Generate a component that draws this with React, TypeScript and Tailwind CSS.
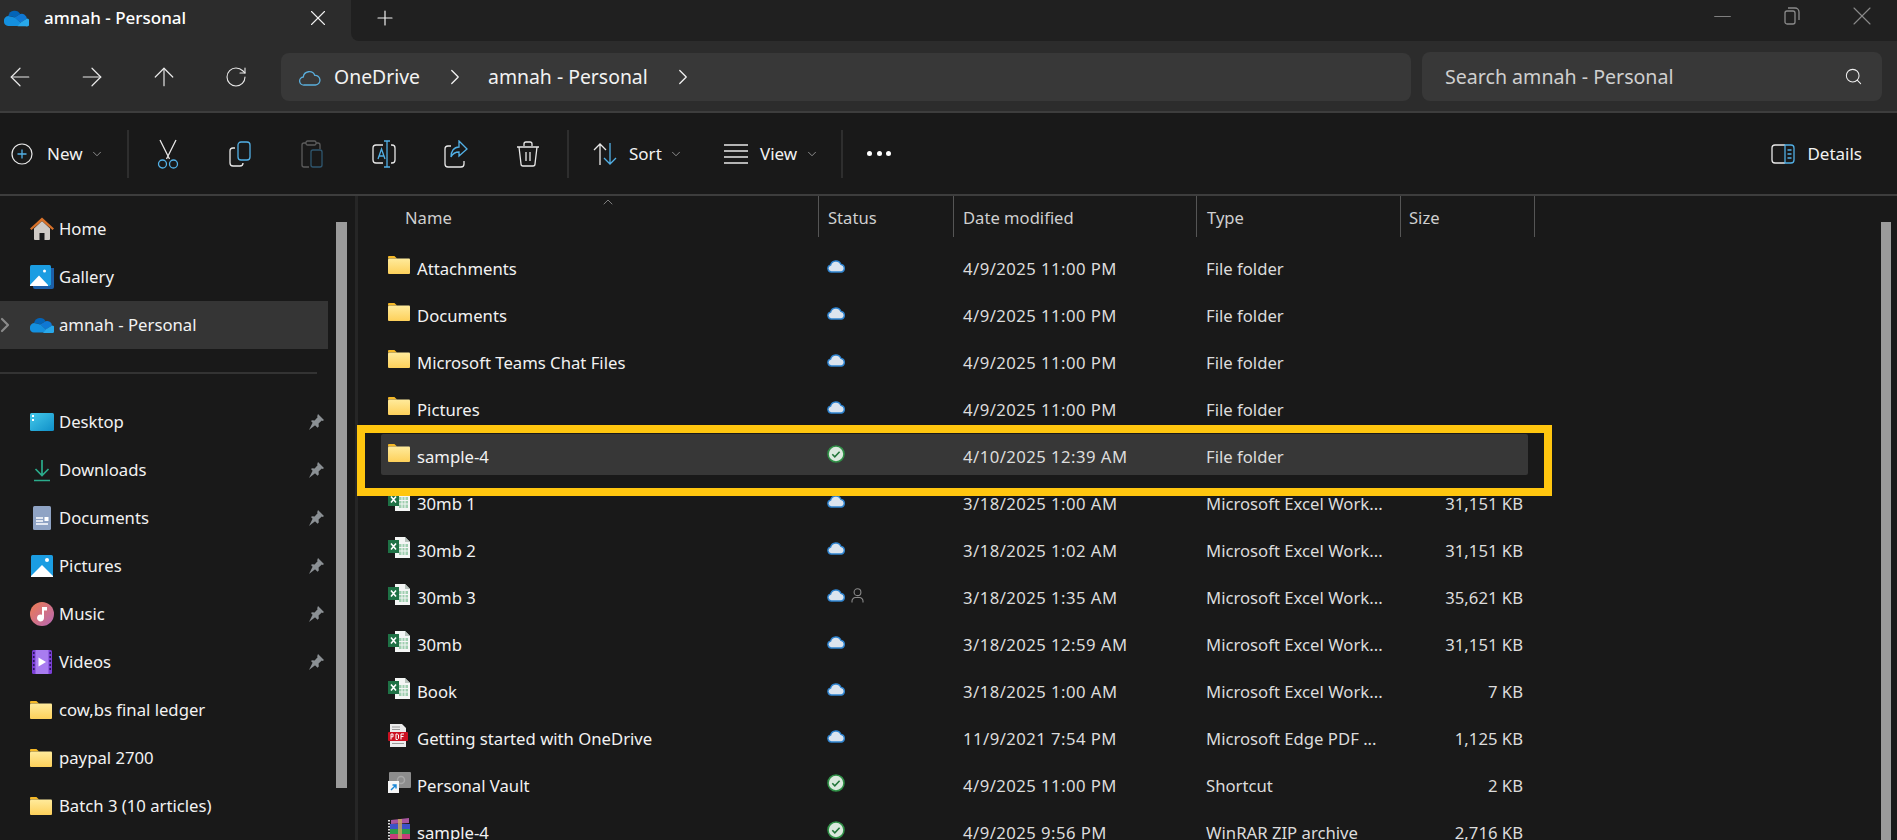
import React from 'react';
import { ArrowLeft, ArrowRight, ArrowUp, RotateCw, X, Plus, ChevronRight, ChevronDown, ChevronUp, Search, Minus } from 'lucide-react';

const Folder = ({ w = 22, h = 18 }: { w?: number; h?: number }) => (
  <svg width={w} height={h} viewBox="0 0 22 18" className="shrink-0">
    <defs>
      <linearGradient id="fold" x1="0" y1="0" x2="0" y2="1">
        <stop offset="0" stopColor="#ffeb9c" />
        <stop offset="1" stopColor="#fdd05a" />
      </linearGradient>
    </defs>
    <path d="M0 1.2C0 .5.5 0 1.2 0h5.2l2.6 2.4H0z" fill="#f5b826" />
    <rect x="0" y="2.4" width="22" height="15.6" rx="1" fill="url(#fold)" />
  </svg>
);

const Excel = () => (
  <svg width="22" height="21" viewBox="0 0 22 21" className="shrink-0">
    <path d="M7 0h10l5 5v16H7z" fill="#f4f6f5" />
    <path d="M17 0l5 5h-5z" fill="#b8c4bd" />
    <path d="M11 7h9v11h-9z" fill="#9fcfb0" />
    <path d="M11 10.5h9M11 14h9M14 7v11M17 7v11" stroke="#f4f6f5" strokeWidth="1" />
    <rect x="0" y="3" width="11" height="13" fill="#1e7145" />
    <path d="M3 6.5l5 6M8 6.5l-5 6" stroke="#fff" strokeWidth="1.6" />
  </svg>
);

const Pdf = () => (
  <svg width="20" height="23" viewBox="0 0 20 23" className="shrink-0">
    <path d="M2 0h12l4 4v19H2z" fill="#ececec" />
    <path d="M4 3h8M4 5.5h8M4 19.5h12" stroke="#9a9a9a" strokeWidth="1" />
    <rect x="0" y="8" width="20" height="9" rx="1" fill="#cc1021" />
    <path d="M3 15.5v-5.5h2v2.8H3M8 10v5.5h1.5l1-1v-3.5l-1-1zM13 15.5V10h3M13 12.5h2.5" stroke="#fff" strokeWidth="1" fill="none" />
  </svg>
);

const VaultLink = () => (
  <svg width="23" height="21" viewBox="0 0 23 21" className="shrink-0">
    <rect x="1" y="0" width="22" height="16" rx="1" fill="#8d8d8d" />
    <circle cx="13" cy="8" r="3.5" fill="none" stroke="#a8a8a8" strokeWidth="1.5" />
    <rect x="0" y="9" width="11" height="12" fill="#f6f6f6" />
    <path d="M3 18l5-5M4.5 13H8v3.5" stroke="#1685d6" strokeWidth="1.4" fill="none" />
  </svg>
);

const Rar = () => (
  <svg width="24" height="24" viewBox="0 0 24 24" className="shrink-0">
    <path d="M3 3l18-2v5l-18 1z" fill="#a855a0" />
    <rect x="2" y="7" width="20" height="5" fill="#3c52c8" />
    <rect x="2" y="12" width="20" height="5" fill="#2e9a4a" />
    <rect x="2" y="17" width="20" height="5" fill="#c83c7a" />
    <path d="M1 3v20" stroke="#ddd" strokeWidth="2" strokeDasharray="1.5 1.5" />
    <rect x="10" y="2" width="4" height="20" fill="#c9a860" opacity=".8" />
  </svg>
);

const CloudStatus = () => (
  <svg width="19" height="14" viewBox="0 0 19 14" className="shrink-0">
    <path d="M4.5 13A3.5 3.5 0 0 1 3.6 6.1 5.5 5.5 0 0 1 14 5.4 3.9 3.9 0 0 1 14.5 13z" fill="#dbe4ee" stroke="#2f84d0" strokeWidth="1.4" />
  </svg>
);

const CheckStatus = () => (
  <svg width="18" height="18" viewBox="0 0 18 18" className="shrink-0">
    <circle cx="9" cy="9" r="8" fill="#dbe9de" stroke="#2f8f46" strokeWidth="1.6" />
    <path d="M5.3 9.3l2.5 2.5 4.8-5" stroke="#23753a" strokeWidth="1.6" fill="none" />
  </svg>
);

const Person = () => (
  <svg width="13" height="15" viewBox="0 0 13 15" fill="none" stroke="#8a8a8a" strokeWidth="1.1">
    <circle cx="6.5" cy="4.2" r="3.4" />
    <path d="M1 14.5v-1.5a3.5 3.5 0 0 1 3.5-3.5h4A3.5 3.5 0 0 1 12 13v1.5" />
  </svg>
);

const Pin = () => (
  <svg width="16" height="16" viewBox="0 0 16 16" fill="#8b9094">
    <path d="M10 0l6 6-1.2 1-1-.4-3.2 3 .2 3-1.3 1.2-6.2-6.2L3.6 6.3l3 .2 3-3.2-.4-1.1zM4.6 8.8l2.5 2.5L1 16z" />
  </svg>
);

const OneDrive = ({ w = 24, h = 16 }: { w?: number; h?: number }) => (
  <svg width={w} height={h} viewBox="0 0 24 16" className="shrink-0">
    <path d="M9.5 1a6 6 0 0 1 6 3.2l-5 3-6.4-1.2A6.4 6.4 0 0 1 9.5 1z" fill="#0364b8" />
    <path d="M15.5 4.2A5 5 0 0 1 22 8.500l-6 4-6-5z" fill="#0f78d4" />
    <path d="M4 6l6.400 1.600 5.600 5-2 3H4a4 4 0 0 1-4-4.500A4.500 4.500 0 0 1 4 6z" fill="#1490df" />
    <path d="M22 8.500A3.800 3.800 0 0 1 20.500 16H13l3-3.700z" fill="#28a8ea" />
  </svg>
);

const Home = () => (
  <svg width="24" height="24" viewBox="0 0 24 24" className="shrink-0">
    <path d="M4 11.500L12 4l8 7.500V22a1 1 0 0 1-1 1h-4.500v-7h-5v7H5a1 1 0 0 1-1-1z" fill="#cfcac5" />
    <path d="M0 11.500L12 .5l12 11-1.500 1.500L12 4 1.500 13z" fill="#d9722a" />
  </svg>
);

const Gallery = () => (
  <svg width="24" height="24" viewBox="0 0 24 24" className="shrink-0">
    <path d="M3 21h18V3h3v19a2 2 0 0 1-2 2H5a2 2 0 0 1-2-2z" fill="#1c5fa8" />
    <rect x="0" y="0" width="21" height="21" rx="1.500" fill="#1b9de2" />
    <path d="M0 20l9-9.500L18 20v1H0z" fill="#fff" />
    <circle cx="14.500" cy="6" r="1.500" fill="#fff" />
  </svg>
);

const Desktop = () => (
  <svg width="24" height="18" viewBox="0 0 24 18" className="shrink-0">
    <defs>
      <linearGradient id="desk" x1="0" y1="0" x2="1" y2="1">
        <stop offset="0" stopColor="#45c9ea" />
        <stop offset="1" stopColor="#0f8fc8" />
      </linearGradient>
    </defs>
    <rect width="24" height="18" rx="1.500" fill="url(#desk)" />
    <rect x="2" y="2" width="2" height="2" fill="#fff" />
    <rect x="2" y="6" width="2" height="2" fill="#fff" />
  </svg>
);

const Downloads = () => (
  <svg width="18" height="23" viewBox="0 0 18 23" fill="none" stroke="#2bac8c" strokeWidth="1.700" className="shrink-0 ml-[3px]">
    <path d="M9 1v15M2.500 10L9 16.500 15.500 10M1 21.500h16" />
  </svg>
);

const Documents = () => (
  <svg width="18" height="24" viewBox="0 0 18 24" className="shrink-0 ml-[3px]">
    <rect width="18" height="24" rx="1.500" fill="#8fa3c4" />
    <path d="M3 12h7M3 15h7M3 18h12" stroke="#fff" strokeWidth="1.300" />
    <rect x="11.500" y="11" width="4" height="4" fill="#fff" />
  </svg>
);

const Pictures = () => (
  <svg width="22" height="22" viewBox="0 0 22 22" className="shrink-0 ml-[1px]">
    <rect width="22" height="22" rx="1.500" fill="#1b9de2" />
    <path d="M0 21l11-11 11 11v1H0z" fill="#fff" />
    <circle cx="16" cy="5" r="2" fill="#fff" />
  </svg>
);

const Music = () => (
  <svg width="24" height="24" viewBox="0 0 24 24" className="shrink-0">
    <defs>
      <linearGradient id="mus" x1="0" y1="0" x2="1" y2="1">
        <stop offset="0" stopColor="#ee7c50" />
        <stop offset="1" stopColor="#b768b6" />
      </linearGradient>
    </defs>
    <circle cx="12" cy="12" r="12" fill="url(#mus)" />
    <path d="M12 5h5v3.500h-3V16a3.500 3.500 0 1 1-2-3.200z" fill="#fff" />
  </svg>
);

const Videos = () => (
  <svg width="20" height="24" viewBox="0 0 20 24" className="shrink-0 ml-[2px]">
    <rect width="20" height="24" rx="1.500" fill="#7b3fd6" />
    <rect x="3.500" y="0" width="13" height="24" fill="#a87cf0" />
    <path d="M6.500 7.500L14 12l-7.500 4.500z" fill="#fff" />
    <path d="M1.750 2v20" stroke="#2c1560" strokeWidth="1.600" strokeDasharray="2 2" />
    <path d="M18.250 2v20" stroke="#2c1560" strokeWidth="1.600" strokeDasharray="2 2" />
  </svg>
);

const quick = [
  { name: 'Desktop', icon: <Desktop />, pin: true },
  { name: 'Downloads', icon: <Downloads />, pin: true },
  { name: 'Documents', icon: <Documents />, pin: true },
  { name: 'Pictures', icon: <Pictures />, pin: true },
  { name: 'Music', icon: <Music />, pin: true },
  { name: 'Videos', icon: <Videos />, pin: true },
  { name: 'cow,bs final ledger', icon: <Folder />, pin: false },
  { name: 'paypal 2700', icon: <Folder />, pin: false },
  { name: 'Batch 3 (10 articles)', icon: <Folder />, pin: false },
];

const EXCEL = 'Microsoft Excel Work...';

const files = [
  { name: 'Attachments', icon: <Folder />, status: 'cloud', date: '4/9/2025 11:00 PM', type: 'File folder', size: '' },
  { name: 'Documents', icon: <Folder />, status: 'cloud', date: '4/9/2025 11:00 PM', type: 'File folder', size: '' },
  { name: 'Microsoft Teams Chat Files', icon: <Folder />, status: 'cloud', date: '4/9/2025 11:00 PM', type: 'File folder', size: '' },
  { name: 'Pictures', icon: <Folder />, status: 'cloud', date: '4/9/2025 11:00 PM', type: 'File folder', size: '' },
  { name: 'sample-4', icon: <Folder />, status: 'ok', date: '4/10/2025 12:39 AM', type: 'File folder', size: '', active: true },
  { name: '30mb 1', icon: <Excel />, status: 'cloud', date: '3/18/2025 1:00 AM', type: EXCEL, size: '31,151 KB' },
  { name: '30mb 2', icon: <Excel />, status: 'cloud', date: '3/18/2025 1:02 AM', type: EXCEL, size: '31,151 KB' },
  { name: '30mb 3', icon: <Excel />, status: 'cloud', shared: true, date: '3/18/2025 1:35 AM', type: EXCEL, size: '35,621 KB' },
  { name: '30mb', icon: <Excel />, status: 'cloud', date: '3/18/2025 12:59 AM', type: EXCEL, size: '31,151 KB' },
  { name: 'Book', icon: <Excel />, status: 'cloud', date: '3/18/2025 1:00 AM', type: EXCEL, size: '7 KB' },
  { name: 'Getting started with OneDrive', icon: <Pdf />, status: 'cloud', date: '11/9/2021 7:54 PM', type: 'Microsoft Edge PDF ...', size: '1,125 KB' },
  { name: 'Personal Vault', icon: <VaultLink />, status: 'ok', date: '4/9/2025 11:00 PM', type: 'Shortcut', size: '2 KB' },
  { name: 'sample-4', icon: <Rar />, status: 'ok', date: '4/9/2025 9:56 PM', type: 'WinRAR ZIP archive', size: '2,716 KB' },
];

const Divider = ({ className = '' }: { className?: string }) => (
  <div className={`w-[2px] h-[48px] bg-[#2e2e2e] shrink-0 ${className}`} />
);

const ToolBtn = ({ children }: { children: React.ReactNode }) => (
  <div className="w-[72px] flex items-center justify-center shrink-0">{children}</div>
);

const columns = 'grid grid-cols-[437px_135px_243px_204px_128px] w-[1147px]';

export default function App() {
  return (
    <div className="w-[1897px] h-[840px] overflow-hidden flex flex-col bg-[#191919] text-[#f2f2f2] text-[16.7px] font-['Noto_Sans','Open_Sans',sans-serif] relative">
      {/* tabs */}
      <div className="h-[41px] flex bg-[#2c2c2c] shrink-0">
        <div className="w-[351px] flex items-center pl-[4px] pb-[5px]">
          <OneDrive w={25} h={18} />
          <span className="ml-[15px] w-[246px] text-[17px] font-medium text-white">amnah - Personal</span>
          <X size={26} strokeWidth={1} className="ml-[15px] text-[#f0f0f0]" />
        </div>
        <div className="flex-1 bg-[#202020] rounded-bl-[8px] flex items-center pb-[5px]">
          <Plus size={24} strokeWidth={1.200} className="ml-[22px] text-[#f0f0f0]" />
          <div className="ml-auto flex items-center text-[#8a8a8a] pb-[4px]">
            <div className="w-[70px] flex justify-center"><Minus size={27} strokeWidth={0.800} /></div>
            <div className="w-[70px] flex justify-center">
              <svg width="16" height="18" viewBox="0 0 16 18" fill="none" stroke="#8a8a8a" strokeWidth="1.300">
                <rect x="1" y="4" width="10" height="13" rx="2" />
                <path d="M4 1h7a4 4 0 0 1 4 4v8" />
              </svg>
            </div>
            <div className="w-[70px] flex justify-center"><X size={32} strokeWidth={0.800} /></div>
          </div>
        </div>
      </div>

      {/* address row */}
      <div className="h-[70px] bg-[#2c2c2c] flex items-start pt-[12px] shrink-0">
        <div className="flex gap-[32px] h-[48px] items-center text-[#e8e8e8]">
          <div className="w-[40px] flex justify-center"><ArrowLeft size={30} strokeWidth={0.950} /></div>
          <div className="w-[40px] flex justify-center"><ArrowRight size={30} strokeWidth={0.950} /></div>
          <div className="w-[40px] flex justify-center"><ArrowUp size={30} strokeWidth={0.950} /></div>
          <div className="w-[40px] flex justify-center"><RotateCw size={24} strokeWidth={1.100} /></div>
        </div>
        <div className="ml-[25px] w-[1130px] h-[48px] bg-[#383838] rounded-[8px] flex items-center pl-[18px] text-[19.4px] shrink-0">
          <svg width="22" height="17" viewBox="0 0 22 17" fill="none" stroke="#5aaedc" strokeWidth="1.300" className="shrink-0">
            <path d="M5 16A4 4 0 0 1 4.300 8 6 6 0 0 1 15.800 6.400 4.800 4.800 0 0 1 16.500 16z" />
          </svg>
          <span className="ml-[13px] w-[87px]">OneDrive</span>
          <ChevronRight size={26} strokeWidth={1.200} className="ml-[21px]" />
          <span className="ml-[20px] w-[164px] whitespace-nowrap">amnah - Personal</span>
          <ChevronRight size={26} strokeWidth={1.200} className="ml-[18px]" />
        </div>
        <div className="ml-[11px] w-[460px] h-[49px] -mt-px bg-[#383838] rounded-[8px] flex items-center pl-[23px] pr-[19px] text-[19.6px] text-[#cfcfcf]">
          <span className="whitespace-nowrap">Search amnah - Personal</span>
          <Search size={19} strokeWidth={1.300} className="ml-auto text-[#f0f0f0]" />
        </div>
      </div>
      <div className="h-[2px] bg-[#3d3d3d] shrink-0" />

      {/* command bar */}
      <div className="h-[81px] flex items-center pl-[11px] shrink-0 text-[17px]">
        <svg width="22" height="22" viewBox="0 0 22 22" fill="none" className="shrink-0">
          <circle cx="11" cy="11" r="10" stroke="#e8e8e8" strokeWidth="1.200" />
          <path d="M11 6.500v9M6.500 11h9" stroke="#52b0e6" strokeWidth="1.300" />
        </svg>
        <span className="ml-[14px] w-[43px]">New</span>
        <ChevronDown size={14} strokeWidth={1.300} className="text-[#b0b0b0]" />
        <Divider className="ml-[23px]" />
        <div className="ml-[3px] flex">
          <ToolBtn>
            <svg width="22" height="30" viewBox="0 0 22 30" fill="none" strokeWidth="1.300" className="shrink-0">
              <path d="M3 1l9.500 19M19 1L9.500 20" stroke="#e8e8e8" />
              <circle cx="5.500" cy="25" r="4" stroke="#52b0e6" />
              <circle cx="16.500" cy="25" r="4" stroke="#52b0e6" />
            </svg>
          </ToolBtn>
          <ToolBtn>
            <svg width="22" height="26" viewBox="0 0 22 26" fill="none" strokeWidth="1.300" className="shrink-0">
              <rect x="9" y="1" width="12" height="18" rx="3" stroke="#52b0e6" />
              <path d="M6 7H4a3 3 0 0 0-3 3v12a3 3 0 0 0 3 3h7a3 3 0 0 0 3-3" stroke="#e8e8e8" />
            </svg>
          </ToolBtn>
          <ToolBtn>
            <svg width="22" height="28" viewBox="0 0 22 28" fill="none" strokeWidth="1.300" className="shrink-0">
              <path d="M5 3H3a2 2 0 0 0-2 2v20a2 2 0 0 0 2 2h5M15 3h2a2 2 0 0 1 2 2v4" stroke="#5c5c5c" />
              <rect x="5" y="1" width="10" height="4" rx="1.500" stroke="#5c5c5c" />
              <rect x="10" y="10" width="11" height="17" rx="2" stroke="#2f566e" />
            </svg>
          </ToolBtn>
          <ToolBtn>
            <svg width="24" height="28" viewBox="0 0 24 28" fill="none" strokeWidth="1.300" className="shrink-0">
              <path d="M11 5H4a3 3 0 0 0-3 3v12a3 3 0 0 0 3 3h7M19 5h1a3 3 0 0 1 3 3v12a3 3 0 0 1-3 3h-1" stroke="#e8e8e8" />
              <path d="M15 1v26M12 1h6M12 27h6M6 19l3.500-10L13 19M7.300 16h4.500" stroke="#52b0e6" />
            </svg>
          </ToolBtn>
          <ToolBtn>
            <svg width="24" height="28" viewBox="0 0 24 28" fill="none" strokeWidth="1.300" className="shrink-0">
              <path d="M7 6H4a3 3 0 0 0-3 3v15a3 3 0 0 0 3 3h13a3 3 0 0 0 3-3v-3" stroke="#e8e8e8" />
              <path d="M15 1l8 8-8 7v-4c-4 0-6 1-8 5 0-6 3-10 8-10z" stroke="#52b0e6" />
            </svg>
          </ToolBtn>
          <ToolBtn>
            <svg width="24" height="26" viewBox="0 0 24 26" fill="none" stroke="#e8e8e8" strokeWidth="1.300" className="shrink-0">
              <path d="M1 6h22M8 5V3a2 2 0 0 1 2-2h4a2 2 0 0 1 2 2v2" />
              <path d="M3 6l2 17a2 2 0 0 0 2 2h10a2 2 0 0 0 2-2l2-17" />
              <path d="M10 11v9M14 11v9" />
            </svg>
          </ToolBtn>
        </div>
        <Divider className="ml-[3px]" />
        <svg width="24" height="24" viewBox="0 0 24 24" fill="none" strokeWidth="1.300" className="ml-[24px] shrink-0">
          <path d="M7 23V2M1 8l6-6 6 6" stroke="#e8e8e8" />
          <path d="M17 1v21M11 16l6 6 6-6" stroke="#52b0e6" />
        </svg>
        <span className="ml-[12px] w-[40px]">Sort</span>
        <ChevronDown size={14} strokeWidth={1.300} className="text-[#b0b0b0]" />
        <svg width="24" height="20" viewBox="0 0 24 20" stroke="#e8e8e8" strokeWidth="1.300" className="ml-[41px] shrink-0">
          <path d="M0 1h24M0 7h24M0 13h24M0 19h24" />
        </svg>
        <span className="ml-[12px] w-[45px]">View</span>
        <ChevronDown size={14} strokeWidth={1.300} className="text-[#b0b0b0]" />
        <Divider className="ml-[22px]" />
        <div className="ml-[24px] w-[24px] flex justify-between">
          <span className="w-[5px] h-[5px] rounded-full bg-white" />
          <span className="w-[5px] h-[5px] rounded-full bg-white" />
          <span className="w-[5px] h-[5px] rounded-full bg-white" />
        </div>
        <div className="ml-auto mr-[35px] flex items-center">
          <svg width="24" height="20" viewBox="0 0 24 20" fill="none" strokeWidth="1.300">
            <path d="M14 1H4a3 3 0 0 0-3 3v12a3 3 0 0 0 3 3h10" stroke="#e8e8e8" />
            <path d="M14 1h6a3 3 0 0 1 3 3v12a3 3 0 0 1-3 3h-6z" stroke="#52b0e6" />
            <path d="M16.500 6h4M16.500 10h4M16.500 14h4" stroke="#52b0e6" />
          </svg>
          <span className="ml-[12px]">Details</span>
        </div>
      </div>
      <div className="h-[2px] bg-[#3d3d3d] shrink-0" />

      {/* body */}
      <div className="flex-1 flex min-h-0">
        <aside className="w-[355px] flex shrink-0">
          <div className="w-[336px] pt-[9px] shrink-0">
            <SideRow name="Home" icon={<Home />} />
            <SideRow name="Gallery" icon={<Gallery />} />
            <SideRow name="amnah - Personal" icon={<OneDrive />} active />
            <div className="w-[317px] h-[2px] bg-[#333333] mt-[23px] mb-[24px]" />
            {quick.map((q) => (
              <SideRow key={q.name} name={q.name} icon={q.icon} pin={q.pin} />
            ))}
          </div>
          <div className="w-[11px] h-[566px] mt-[26px] bg-[#9b9b9b] shrink-0" />
        </aside>
        <div className="w-[3px] bg-[#262626] shrink-0" />

        <main className="flex-1 flex min-w-0">
          <div className="ml-[23px] flex-1 min-w-0 relative">
            <ChevronUp size={16} strokeWidth={1} className="absolute left-[219px] -top-[2px] text-[#b0b0b0]" />
            <div className="grid grid-cols-[438px_135px_243px_204px_134px] h-[41px] text-[#cfcfcf] text-[16.6px]">
              <div className="border-r border-[#555555] pl-[24px] flex items-center pt-[3px]">Name</div>
              <div className="border-r border-[#555555] pl-[9px] flex items-center pt-[3px]">Status</div>
              <div className="border-r border-[#555555] pl-[9px] flex items-center pt-[3px]">Date modified</div>
              <div className="border-r border-[#555555] pl-[10px] flex items-center pt-[3px]">Type</div>
              <div className="border-r border-[#555555] pl-[8px] flex items-center pt-[3px]">Size</div>
            </div>
            <div className="pt-[9px] flex flex-col gap-[6px]">
              {files.map((f, i) => (
                <div key={i} className={`${columns} h-[41px] shrink-0 rounded-[2px] ${f.active ? 'bg-[#373737]' : ''}`}>
                  <div className="flex items-center pl-[7px]">
                    <div className="w-[29px] -mt-[3px] flex items-center">{f.icon}</div>
                    <span className="pt-[4px] whitespace-nowrap">{f.name}</span>
                  </div>
                  <div className="flex items-center pl-[9px] gap-[5px] -mt-[1px]">
                    {f.status === 'cloud' ? <CloudStatus /> : <CheckStatus />}
                    {f.shared && <Person />}
                  </div>
                  <div className="flex items-center pl-[10px] pt-[4px] text-[#dcdcdc] tracking-[0.45px] whitespace-nowrap">{f.date}</div>
                  <div className="flex items-center pl-[10px] pt-[4px] text-[#dcdcdc] whitespace-nowrap">{f.type}</div>
                  <div className="flex items-center justify-end pr-[5px] pt-[4px] text-[#dcdcdc] whitespace-nowrap">{f.size}</div>
                </div>
              ))}
            </div>
          </div>
          <div className="w-[10px] mt-[26px] mr-[6px] bg-[#9b9b9b] shrink-0" />
        </main>
      </div>

      {/* highlight drawn on top of the screenshot */}
      <div className="absolute left-[357px] top-[425px] w-[1195px] h-[71px] border-[8px] border-[#ffc60f] pointer-events-none" />
    </div>
  );
}

function SideRow({ name, icon, active, pin }: { name: string; icon: React.ReactNode; active?: boolean; pin?: boolean }) {
  return (
    <div className={`w-[328px] h-[48px] flex items-center ${active ? 'bg-[#353535]' : ''}`}>
      <div className="w-[30px] shrink-0">
        {active && <ChevronRight size={24} strokeWidth={2.200} className="-ml-[7px] text-[#8a8a8a]" />}
      </div>
      <div className="w-[29px] flex items-center shrink-0">{icon}</div>
      <span className="whitespace-nowrap">{name}</span>
      {pin && (
        <span className="ml-auto mr-[4px]">
          <Pin />
        </span>
      )}
    </div>
  );
}
